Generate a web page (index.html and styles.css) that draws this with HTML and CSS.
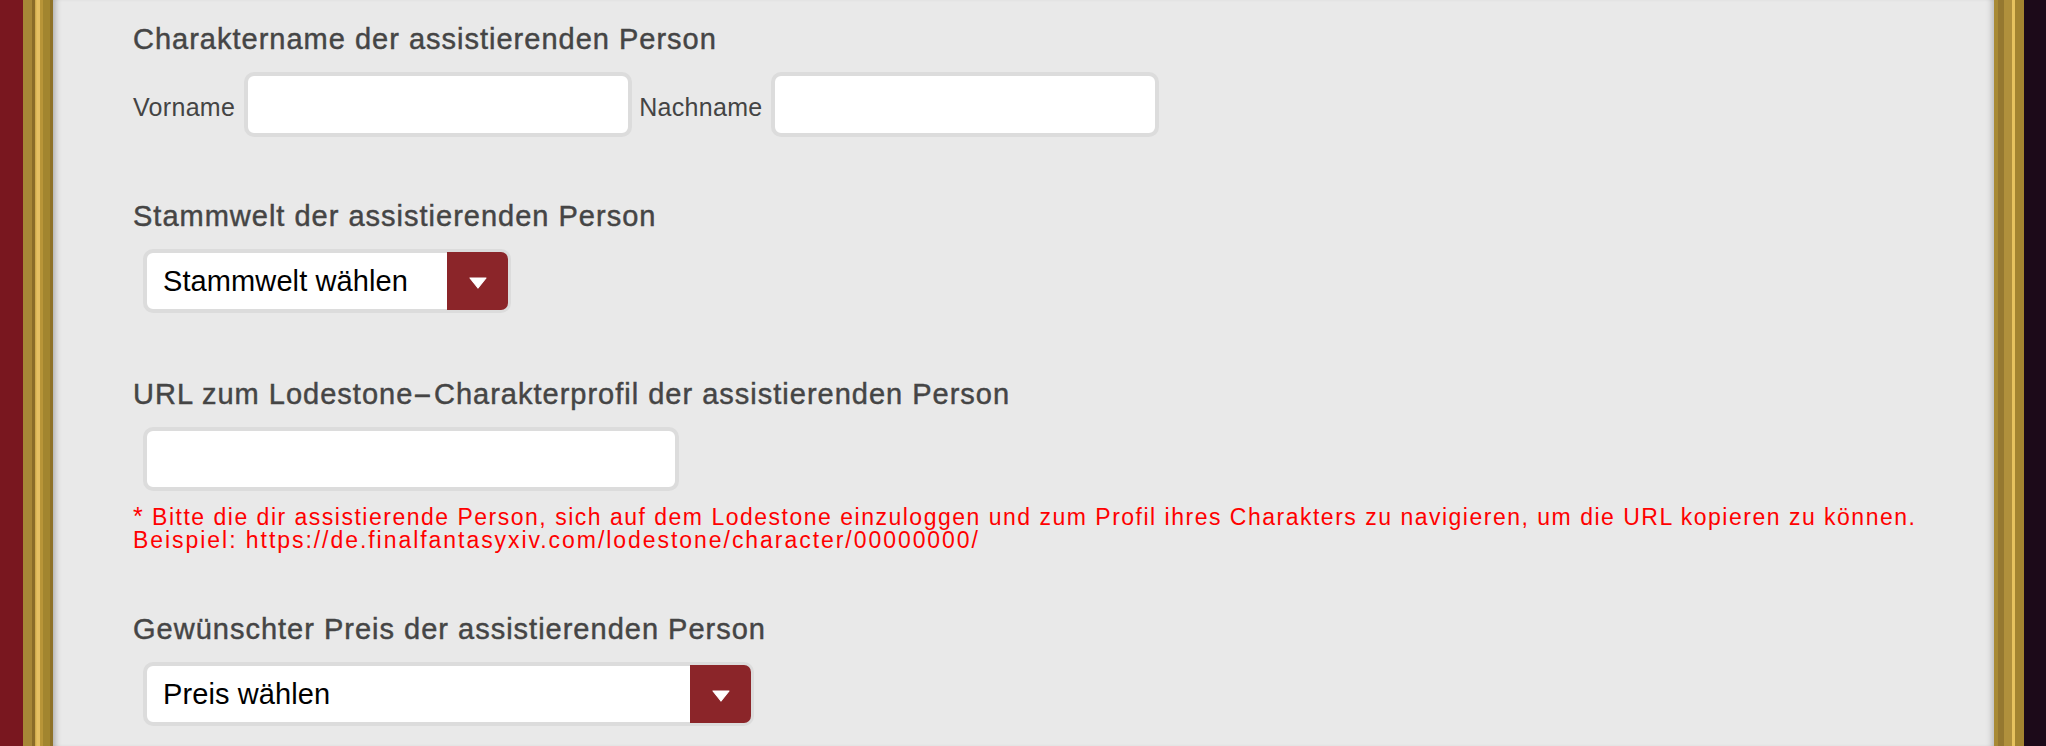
FILE: index.html
```html
<!DOCTYPE html>
<html lang="de">
<head>
<meta charset="utf-8">
<title>Assistenz</title>
<link rel="stylesheet" href="styles.css">
</head>
<body>
<div class="page">
  <div class="edge edge-left"></div>
  <div class="frame frame-left"></div>
  <main class="content">
    <section class="field field-name">
      <h2 class="field-title">Charaktername der assistierenden Person</h2>
      <div class="name-row">
        <label class="name-label label-first" for="vorname">Vorname</label>
        <input class="text-input name-input" id="vorname" type="text">
        <label class="name-label label-second" for="nachname">Nachname</label>
        <input class="text-input name-input" id="nachname" type="text">
      </div>
    </section>

    <section class="field">
      <h2 class="field-title">Stammwelt der assistierenden Person</h2>
      <div class="select select-world">
        <span class="select-text">Stammwelt wählen</span>
        <span class="select-btn"><svg class="caret" viewBox="0 0 18 12" width="18" height="12"><polygon points="1,1 17,1 9,11" fill="#fff" stroke="#fff" stroke-width="1.2" stroke-linejoin="round"/></svg></span>
      </div>
    </section>

    <section class="field field-url">
      <h2 class="field-title">URL zum Lodestone<span class="dash">-</span>Charakterprofil der assistierenden Person</h2>
      <input class="text-input url-input" type="text">
      <p class="note"><span class="note-star">*</span> Bitte die dir assistierende Person, sich auf dem Lodestone einzuloggen und zum Profil ihres Charakters zu navigieren, um die URL kopieren zu können.<br><span class="note-url">Beispiel: https://de.finalfantasyxiv.com/lodestone/character/00000000/</span></p>
    </section>

    <section class="field">
      <h2 class="field-title">Gewünschter Preis der assistierenden Person</h2>
      <div class="select select-price">
        <span class="select-text">Preis wählen</span>
        <span class="select-btn"><svg class="caret" viewBox="0 0 18 12" width="18" height="12"><polygon points="1,1 17,1 9,11" fill="#fff" stroke="#fff" stroke-width="1.2" stroke-linejoin="round"/></svg></span>
      </div>
    </section>
  </main>
  <div class="frame frame-right"></div>
  <div class="edge edge-right"></div>
</div>
</body>
</html>
```
FILE: styles.css
```css
html, body {
  margin: 0;
  padding: 0;
  height: 100%;
  overflow: hidden;
}

body {
  font-family: "Liberation Sans", Arial, "Noto Sans CJK JP", sans-serif;
  background: #e9e9e9;
}

.page {
  display: flex;
  height: 746px;
  overflow: hidden;
}

.edge-left {
  flex: 0 0 23px;
  background: #79171f;
}

.edge-right {
  flex: 0 0 22px;
  background: #1c0a19;
}

.frame {
  flex: 0 0 30px;
}

.frame-left {
  background: linear-gradient(to right,
    #a78737 0, #a78737 9px,
    #8a6c28 9px, #8a6c28 12px,
    #c9a444 12px, #e5c062 14px, #e5c062 17px,
    #b89538 17px, #b89538 20px,
    #a2852f 20px, #a2852f 27px,
    #8e7229 27px, #8e7229 30px);
}

.frame-right {
  background: linear-gradient(to right,
    #a88a35 0, #a88a35 4px,
    #957830 4px, #957830 10px,
    #b0903c 10px, #b0903c 18px,
    #e6c25e 18px, #e6c25e 21px,
    #a38430 21px, #a38430 30px);
}

.content {
  flex: 1 1 auto;
  background: #e9e9e9;
  padding: 22px 0 0 80px;
  box-shadow: inset 7px 0 6px -5px rgba(0,0,0,0.28), inset -7px 0 6px -5px rgba(0,0,0,0.22);
  color: #444;
}

.field {
  margin-bottom: 64px;
}

.field-name {
  margin-bottom: 62px;
}

.field-url {
  margin-bottom: 60px;
}

.field-title {
  margin: 0 0 16px 0;
  font-size: 29px;
  line-height: 34px;
  font-weight: normal;
  letter-spacing: 1px;
  color: #454545;
  -webkit-text-stroke: 0.45px #454545;
}

.dash {
  display: inline-block;
  transform: scaleX(2);
  margin: 0 5px;
}

.name-row {
  display: flex;
  align-items: flex-end;
}

.name-label {
  font-size: 25px;
  letter-spacing: 0.3px;
  color: #444;
  margin-bottom: 15px;
}

.label-first {
  margin-right: 9px;
}

.label-second {
  margin-left: 7px;
  margin-right: 9px;
}

.text-input {
  box-sizing: border-box;
  border: 4px solid #dcdcdc;
  border-radius: 10px;
  background: #fff;
  outline: none;
  padding: 0 14px;
  font-family: inherit;
  font-size: 24px;
  margin: 0;
}

.name-input {
  width: 388px;
  height: 65px;
}

.url-input {
  display: block;
  width: 536px;
  height: 64px;
  margin-left: 10px;
}

.select {
  box-sizing: border-box;
  display: flex;
  align-items: stretch;
  height: 64px;
  margin-left: 10px;
  border: 4px solid #dcdcdc;
  border-radius: 10px;
  background: #fff;
}

.select-world {
  width: 368px;
}

.select-price {
  width: 611px;
}

.select-text {
  flex: 1 1 auto;
  display: flex;
  align-items: center;
  padding-left: 16px;
  font-size: 29px;
  letter-spacing: 0.1px;
  color: #000;
}

.select-btn {
  flex: 0 0 61px;
  display: flex;
  align-items: center;
  justify-content: center;
  background: #8b2529;
  border-radius: 0 7px 7px 0;
  margin: -1px -1px -1px 0;
}

.caret {
  display: block;
  margin-top: 3px;
}

.note {
  margin: 14px 0 0 0;
  font-size: 23px;
  line-height: 23px;
  letter-spacing: 1.5px;
  color: #ff0000;
}

.note-star {
  font-size: 25px;
}

.note-url {
  letter-spacing: 1.95px;
}
```
